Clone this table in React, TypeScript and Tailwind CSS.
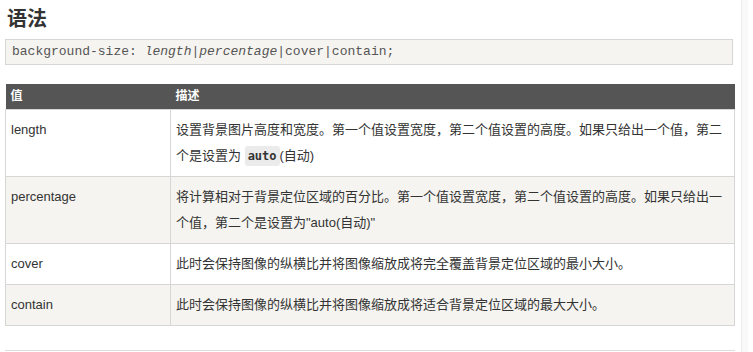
const rows = [
  {
    value: "length",
    desc: (
      <>
        <span>设置背景图片高度和宽度。第一个值设置宽度，第二个值设置的高度。如果只给出一个值，第二</span>
        <span>个是设置为 </span>
        <code className="inline-block rounded-[3px] bg-[#ebebeb] px-[3px] align-middle font-['DejaVu_Sans_Mono',monospace] text-[12px] font-bold leading-[20px] text-[#333]">
          auto
        </code>
        <span>(自动)</span>
      </>
    ),
  },
  {
    value: "percentage",
    desc: "将计算相对于背景定位区域的百分比。第一个值设置宽度，第二个值设置的高度。如果只给出一个值，第二个是设置为\"auto(自动)\"",
  },
  { value: "cover", desc: "此时会保持图像的纵横比并将图像缩放成将完全覆盖背景定位区域的最小大小。" },
  { value: "contain", desc: "此时会保持图像的纵横比并将图像缩放成将适合背景定位区域的最大大小。" },
];

export default function App() {
  return (
    <div className="flex h-[352px] w-[753px] overflow-hidden bg-white font-['Liberation_Sans','Noto_Sans_CJK_SC',sans-serif] text-[#333]">
      <div className="w-[741px] pl-[5px] pr-[6px]">
        <h2 className="pl-[2px] pt-[4px] text-[20px] font-bold leading-[30px] text-[#333]">语法</h2>

        <div className="mr-[2px] mt-[5px] border border-[#d6d6d6] bg-[#f5f4f0] px-[6px] font-['Liberation_Mono',monospace] text-[13px] leading-[24px] text-[#555]">
          background-size: <i>length</i>|<i>percentage</i>|cover|contain;
        </div>

        <table className="mt-[19px] w-full border-collapse text-[13px]">
          <thead>
            <tr className="bg-[#555] text-left text-white">
              <th className="h-[25px] w-[165px] px-[5px] text-[12px] font-bold">值</th>
              <th className="h-[25px] px-[5px] text-[12px] font-bold">描述</th>
            </tr>
          </thead>
          <tbody>
            {rows.map((r, i) => (
              <tr key={r.value} className={i % 2 === 1 ? "bg-[#f5f4f0]" : "bg-white"}>
                <td className="border border-[#d6d6d6] px-[5px] py-[7px] align-top leading-[26px]">{r.value}</td>
                <td className="border border-[#d6d6d6] py-[7px] pl-[5px] pr-[4px] align-top leading-[26px]">{r.desc}</td>
              </tr>
            ))}
          </tbody>
        </table>

        <hr className="mt-[24px] border-t border-[#ddd]" />
      </div>
      <div className="w-[7px] border-l border-[#ececec] bg-[#f9f9f9]" />
    </div>
  );
}
